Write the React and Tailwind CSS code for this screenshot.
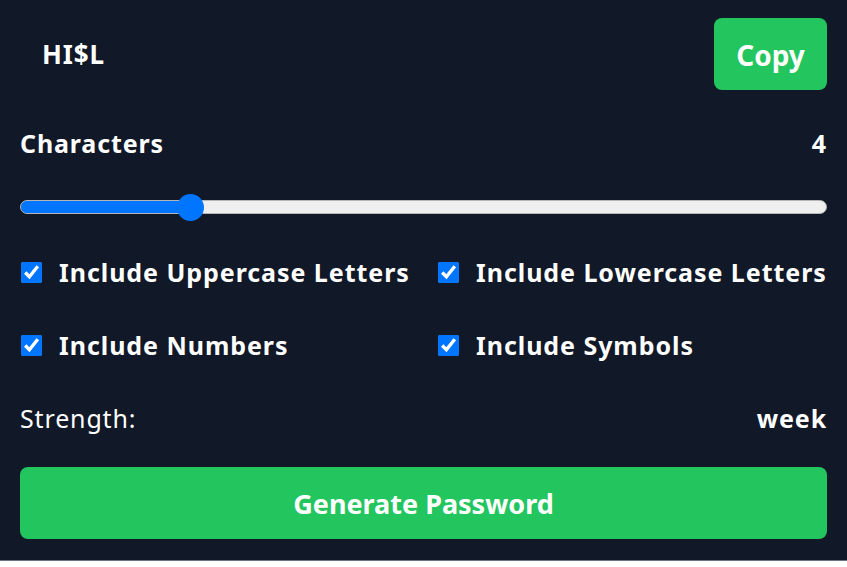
import { useState } from "react";

const options = [
  { id: "upper", label: "Include Uppercase Letters" },
  { id: "lower", label: "Include Lowercase Letters" },
  { id: "numbers", label: "Include Numbers" },
  { id: "symbols", label: "Include Symbols" },
];

export default function App() {
  const [length, setLength] = useState(4);
  const [checked, setChecked] = useState({
    upper: true,
    lower: true,
    numbers: true,
    symbols: true,
  });
  const min = 0;
  const max = 20;
  const pct = ((length - min) / (max - min)) * (805 - 27) + 13.5;

  return (
    <div className="min-h-screen bg-white font-['Noto_Sans',sans-serif]">
      <div className="h-[561px] bg-[#111827] border-b border-[#6b7280] px-5 pt-[18px] text-white">
        <div className="flex items-center justify-between">
          <input
            readOnly
            value="HI$L"
            className="bg-transparent pl-[22px] text-[26px] font-bold tracking-[0.9px] outline-none w-[400px]"
          />
          <button className="h-[72px] w-[113px] rounded-lg bg-[#22c55e] pt-[2px] text-[28px] font-bold">
            Copy
          </button>
        </div>

        <div className="mt-[37px] flex items-center justify-between text-[25px] font-bold leading-8 tracking-[0.85px]">
          <span>Characters</span>
          <span>{length}</span>
        </div>

        <div className="mt-[34px] flex h-7 items-center">
          <input
            type="range"
            min={min}
            max={max}
            value={length}
            onChange={(e) => setLength(Number(e.target.value))}
            style={{
              background: `linear-gradient(to right, #0075ff ${(pct / 805) * 100}%, #efefef ${(pct / 805) * 100}%)`,
            }}
            className="h-[14px] w-full appearance-none rounded-full border border-[#b5b5b5] outline-none [&::-webkit-slider-thumb]:h-[27px] [&::-webkit-slider-thumb]:w-[27px] [&::-webkit-slider-thumb]:appearance-none [&::-webkit-slider-thumb]:rounded-full [&::-webkit-slider-thumb]:bg-[#0075ff]"
          />
        </div>

        <div className="mt-[35px] grid grid-cols-[417px_1fr] gap-y-[41px] text-[25px] font-bold leading-8 tracking-[0.95px]">
          {options.map((o) => (
            <label key={o.id} className="flex items-center gap-[17px]">
              <input
                type="checkbox"
                checked={checked[o.id]}
                onChange={() => setChecked({ ...checked, [o.id]: !checked[o.id] })}
                className="ml-px h-[21px] w-[21px] shrink-0 accent-[#0075ff]"
              />
              <span className="whitespace-nowrap">{o.label}</span>
            </label>
          ))}
        </div>

        <div className="mt-[41px] flex items-center justify-between text-[25px] leading-8 tracking-[0.85px]">
          <span>Strength:</span>
          <span className="font-bold">week</span>
        </div>

        <button className="mt-[33px] h-[72px] w-full rounded-lg bg-[#22c55e] pt-[3px] text-[27px] font-bold">
          Generate Password
        </button>
      </div>
    </div>
  );
}
